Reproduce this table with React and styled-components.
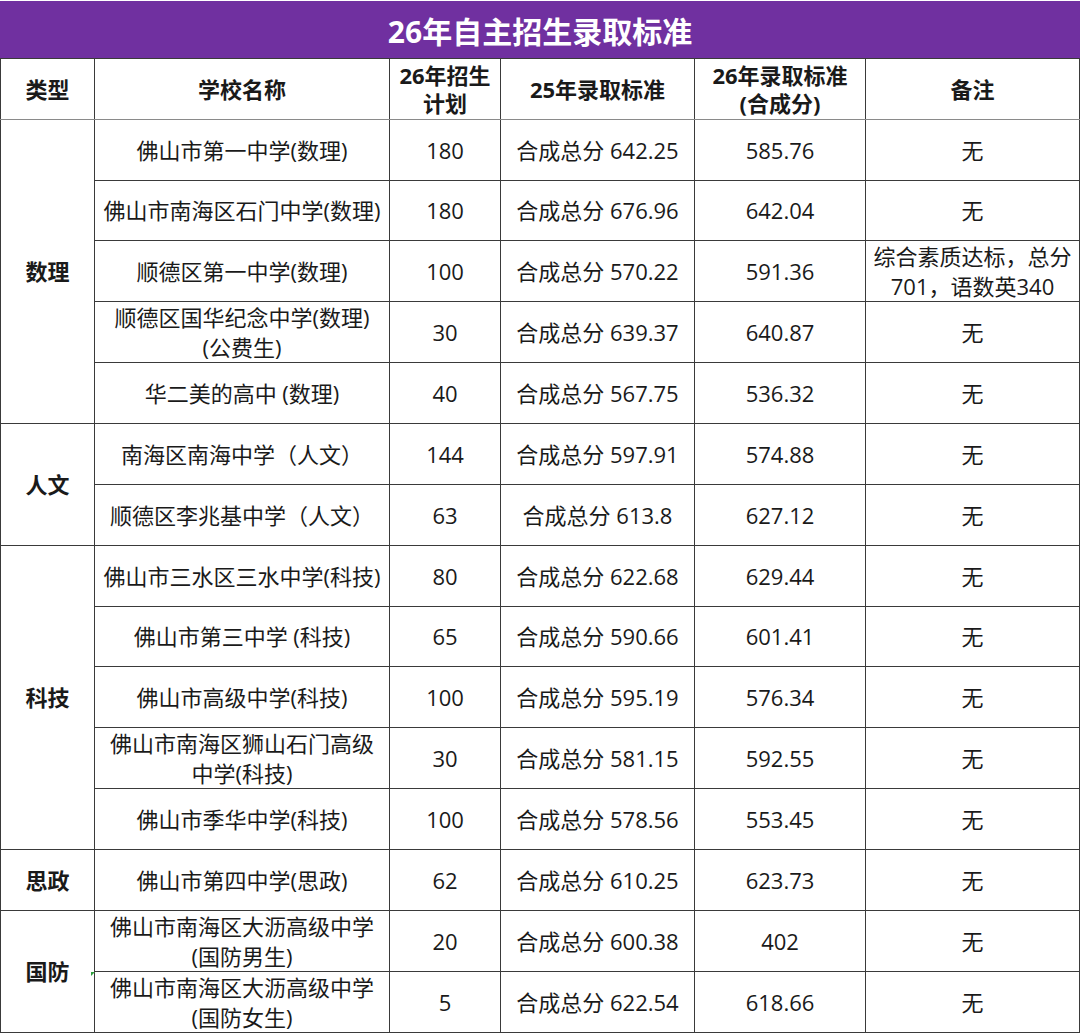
import styled, { createGlobalStyle } from "styled-components";

const GlobalStyle = createGlobalStyle`
  html, body {
    margin: 0;
    padding: 0;
    background: #ffffff;
  }
  body {
    font-family: "Open Sans", "Noto Sans CJK SC", "Noto Sans", sans-serif;
    color: #1a1a1a;
  }
`;

const groups = [
  {
    type: "数理",
    rows: [
      ["佛山市第一中学(数理)", "180", "合成总分 642.25", "585.76", "无"],
      ["佛山市南海区石门中学(数理)", "180", "合成总分 676.96", "642.04", "无"],
      ["顺德区第一中学(数理)", "100", "合成总分 570.22", "591.36", "综合素质达标，总分\n701，语数英340"],
      ["顺德区国华纪念中学(数理)\n(公费生)", "30", "合成总分 639.37", "640.87", "无"],
      ["华二美的高中 (数理)", "40", "合成总分 567.75", "536.32", "无"],
    ],
  },
  {
    type: "人文",
    rows: [
      ["南海区南海中学（人文）", "144", "合成总分 597.91", "574.88", "无"],
      ["顺德区李兆基中学（人文）", "63", "合成总分 613.8", "627.12", "无"],
    ],
  },
  {
    type: "科技",
    rows: [
      ["佛山市三水区三水中学(科技)", "80", "合成总分 622.68", "629.44", "无"],
      ["佛山市第三中学 (科技)", "65", "合成总分 590.66", "601.41", "无"],
      ["佛山市高级中学(科技)", "100", "合成总分 595.19", "576.34", "无"],
      ["佛山市南海区狮山石门高级\n中学(科技)", "30", "合成总分 581.15", "592.55", "无"],
      ["佛山市季华中学(科技)", "100", "合成总分 578.56", "553.45", "无"],
    ],
  },
  {
    type: "思政",
    rows: [["佛山市第四中学(思政)", "62", "合成总分 610.25", "623.73", "无"]],
  },
  {
    type: "国防",
    marker: true,
    rows: [
      ["佛山市南海区大沥高级中学\n(国防男生)", "20", "合成总分 600.38", "402", "无"],
      ["佛山市南海区大沥高级中学\n(国防女生)", "5", "合成总分 622.54", "618.66", "无"],
    ],
  },
];

const headers = ["类型", "学校名称", "26年招生\n计划", "25年录取标准", "26年录取标准\n(合成分)", "备注"];
const widths = [94, 295, 111, 194, 171, 214];

const Page = styled.div`
  width: 1080px;
  height: 1033px;
  overflow: hidden;
`;

const TitleBar = styled.div`
  height: 57px;
  margin-top: 1px;
  background: #7030a0;
  color: #ffffff;
  display: flex;
  align-items: center;
  justify-content: center;
  font-size: 30px;
  font-weight: 700;
`;

const Table = styled.table`
  width: 1079px;
  border-collapse: collapse;
  table-layout: fixed;
`;

const Row = styled.tr`
  height: 60.8px;
`;

const Cell = styled.td`
  border: 1px solid #3a3a3a;
  padding: 0 3px;
  text-align: center;
  vertical-align: middle;
  font-size: 22px;
  line-height: 30px;
  font-weight: ${(p) => (p.$bold ? 700 : 400)};
  white-space: pre-line;
  position: relative;
  &:last-child {
    border-left-color: #9a9a9a;
  }
`;

const HeadCell = styled(Cell).attrs({ as: "th" })`
  font-weight: 700;
  line-height: 28px;
  border-bottom-color: #8a8a8a;
`;

const Marker = styled.span`
  position: absolute;
  right: -1px;
  top: 50%;
  margin-top: 1px;
  width: 0;
  height: 0;
  border-top: 4px solid #2e9e3e;
  border-left: 4px solid transparent;
  transform: scaleX(-1);
`;

export default function App() {
  return (
    <Page>
      <GlobalStyle />
      <TitleBar>26年自主招生录取标准</TitleBar>
      <Table>
        <colgroup>
          {widths.map((w, i) => (
            <col key={i} style={{ width: w }} />
          ))}
        </colgroup>
        <thead>
          <Row>
            {headers.map((h, i) => (
              <HeadCell key={i}>{h}</HeadCell>
            ))}
          </Row>
        </thead>
        <tbody>
          {groups.map((g) =>
            g.rows.map((r, i) => (
              <Row key={g.type + i}>
                {i === 0 && (
                  <Cell $bold rowSpan={g.rows.length}>
                    {g.type}
                    {g.marker && <Marker />}
                  </Cell>
                )}
                {r.map((v, j) => (
                  <Cell key={j}>{v}</Cell>
                ))}
              </Row>
            ))
          )}
        </tbody>
      </Table>
    </Page>
  );
}
